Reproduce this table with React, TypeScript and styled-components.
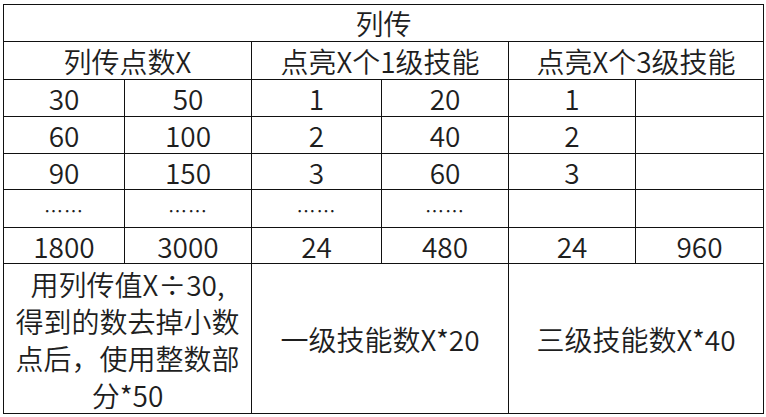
import React from "react";
import styled, { createGlobalStyle } from "styled-components";

const GlobalStyle = createGlobalStyle`
  html, body {
    margin: 0;
    padding: 0;
    background: #ffffff;
  }
  body {
    font-family: "Noto Sans CJK SC", "Noto Sans", sans-serif;
    color: #1e1e1e;
  }
`;

const Sheet = styled.div`
  padding: 4px 0 0 3px;
`;

const Grid = styled.div`
  display: grid;
  grid-template-columns: 120px 126px 129px 126px 126px 127px;
  grid-template-rows: 36px 37px 36px 36px 35px 37px 35px 149px;
  gap: 1px;
  padding: 1px;
  width: max-content;
  background: #111111;
`;

const Cell = styled.div<{ $span?: number }>`
  grid-column: span ${(p) => p.$span ?? 1};
  background: #ffffff;
  display: flex;
  align-items: center;
  justify-content: center;
  font-size: 28px;
  font-weight: 350;
  line-height: 1;
  white-space: nowrap;
`;

const Dots = styled(Cell)`
  font-size: 19px;
  letter-spacing: 1px;
  padding-top: 4px;
`;

const Note = styled(Cell)`
  flex-direction: column;
  line-height: 37px;
  padding-top: 2px;
`;

const rows: (string | null)[][] = [
  ["30", "50", "1", "20", "1", null],
  ["60", "100", "2", "40", "2", null],
  ["90", "150", "3", "60", "3", null],
];

export default function App() {
  return (
    <>
      <GlobalStyle />
      <Sheet>
        <Grid>
          <Cell $span={6}>列传</Cell>
          <Cell $span={2}>列传点数X</Cell>
          <Cell $span={2}>点亮X个1级技能</Cell>
          <Cell $span={2}>点亮X个3级技能</Cell>
          {rows.map((row, i) =>
            row.map((v, j) => <Cell key={`${i}-${j}`}>{v}</Cell>)
          )}
          <Dots>……</Dots>
          <Dots>……</Dots>
          <Dots>……</Dots>
          <Dots>……</Dots>
          <Cell />
          <Cell />
          <Cell>1800</Cell>
          <Cell>3000</Cell>
          <Cell>24</Cell>
          <Cell>480</Cell>
          <Cell>24</Cell>
          <Cell>960</Cell>
          <Note $span={2}>
            <span>用列传值X÷30,</span>
            <span>得到的数去掉小数</span>
            <span>点后，使用整数部</span>
            <span>分*50</span>
          </Note>
          <Cell $span={2}>一级技能数X*20</Cell>
          <Cell $span={2}>三级技能数X*40</Cell>
        </Grid>
      </Sheet>
    </>
  );
}
